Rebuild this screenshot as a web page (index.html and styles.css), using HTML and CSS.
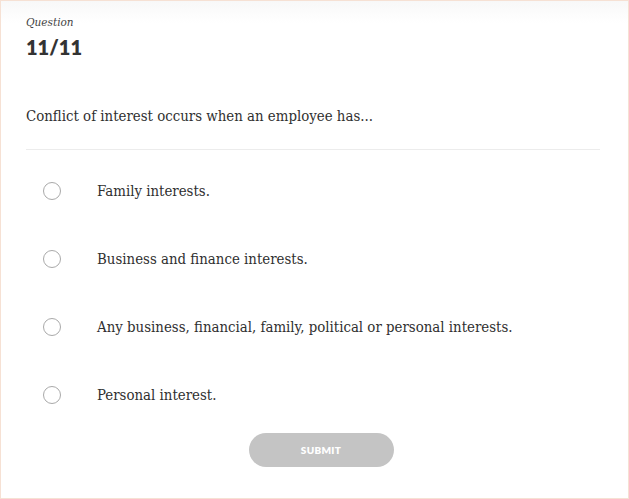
FILE: index.html
```html
<!DOCTYPE html>
<html>
<head>
<meta charset="utf-8">
<link rel="stylesheet" href="styles.css">
</head>
<body>
<div class="frame">
  <div class="head">
    <div class="label">Question</div>
    <div class="count">11/11</div>
  </div>
  <p class="question">Conflict of interest occurs when an employee has...</p>
  <div class="divider"></div>
  <ul class="options">
    <li class="option"><span class="radio"></span><span class="text">Family interests.</span></li>
    <li class="option"><span class="radio"></span><span class="text">Business and finance interests.</span></li>
    <li class="option"><span class="radio"></span><span class="text">Any business, financial, family, political or personal interests.</span></li>
    <li class="option"><span class="radio"></span><span class="text">Personal interest.</span></li>
  </ul>
  <div class="actions"><button class="submit">SUBMIT</button></div>
</div>
</body>
</html>
```
FILE: styles.css
```css
html, body { margin: 0; padding: 0; background: #fff; }
.frame {
  box-sizing: border-box;
  width: 629px;
  height: 499px;
  border: 1px solid #f6e1d4;
  background: linear-gradient(#f8f8f8, #fff 22px);
  padding: 0 28px 0 25px;
  display: flex;
  flex-direction: column;
}
.head { padding-top: 14px; }
.label {
  font-family: "DejaVu Serif", serif;
  font-style: italic;
  font-size: 10.5px;
  color: #444;
  line-height: 14px;
}
.count {
  font-family: Lato, sans-serif;
  font-weight: 800;
  font-size: 20px;
  color: #333;
  line-height: 24px;
  margin-top: 6px;
}
.question {
  margin: 47px 0 0;
  font-family: "DejaVu Serif Condensed", "DejaVu Serif", serif;
  font-size: 14.85px;
  line-height: 20px;
  color: #2f2f2f;
}
.divider { height: 1px; background: #ececec; margin-top: 23px; }
.options { list-style: none; margin: 24px 0 0; padding: 0; }
.option {
  display: flex;
  align-items: center;
  height: 34px;
  margin-bottom: 34px;
  font-family: "DejaVu Serif Condensed", "DejaVu Serif", serif;
  font-size: 14.85px;
  color: #2f2f2f;
}
.radio {
  box-sizing: border-box;
  width: 18px; height: 18px;
  border: 1px solid #a9a9a9;
  border-radius: 50%;
  margin-left: 17px;
  margin-right: 36px;
  flex: none;
}
.actions { display: flex; justify-content: center; margin-top: -13px; }
.submit {
  width: 145px; height: 34px;
  border: none;
  border-radius: 17px;
  background: #c4c4c4;
  color: #fff;
  font-family: Lato, sans-serif;
  font-weight: 800;
  font-size: 10px;
  letter-spacing: 0.3px;
  margin-left: 16px;
}
```
